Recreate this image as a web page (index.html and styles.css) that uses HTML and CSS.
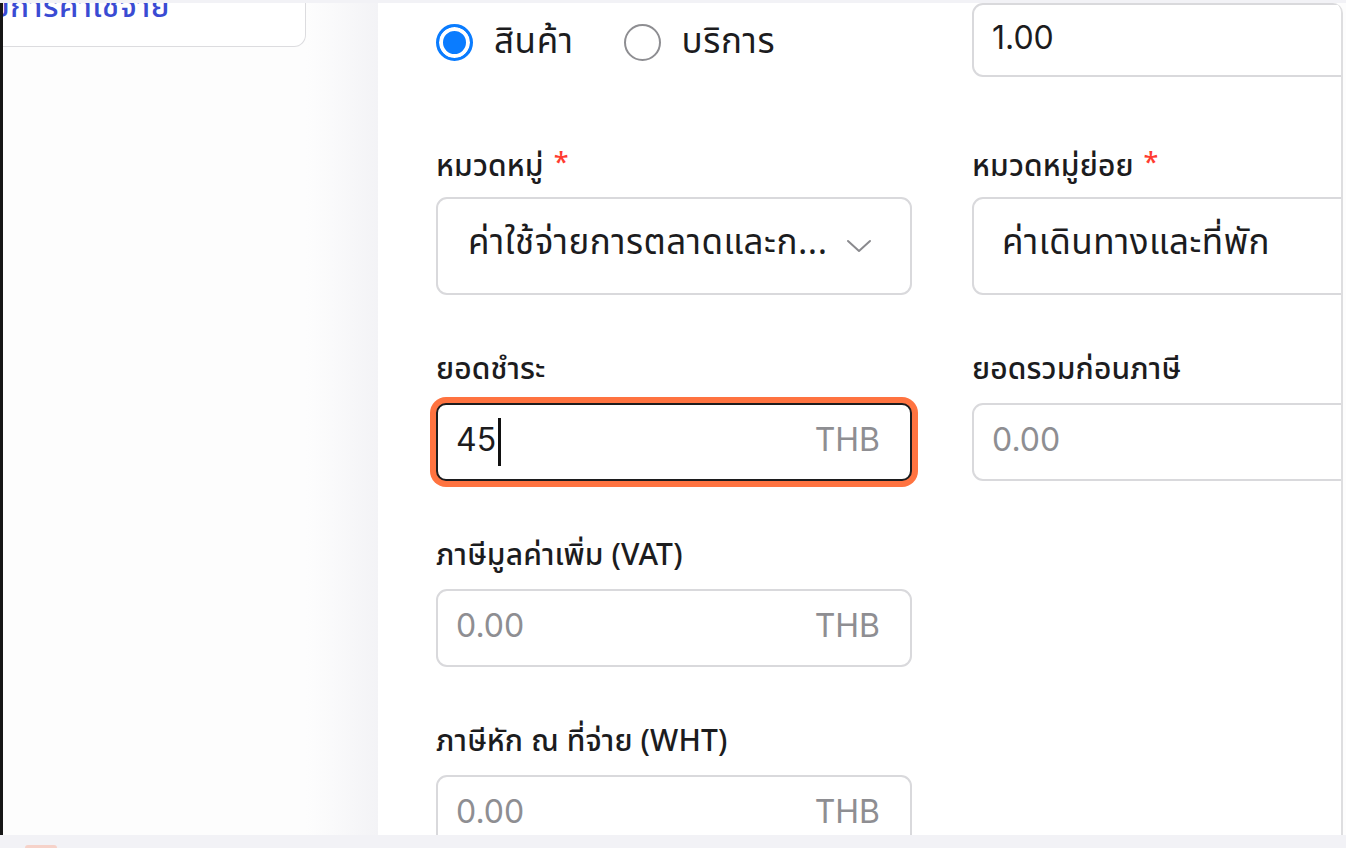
FILE: index.html
```html
<!DOCTYPE html>
<html lang="th">
<head>
<meta charset="utf-8">
<title>รายการค่าใช้จ่าย</title>
<link rel="stylesheet" href="styles.css">
</head>
<body>
<div class="screen">
  <div class="topbar"></div>
  <div class="body">
    <aside class="sidebar">
      <div class="nav-card"><span class="nav-title">รายการค่าใช้จ่าย</span></div>
    </aside>
    <div class="divider"></div>
    <main class="panel">
      <div class="form">
        <div class="row row-first">
          <div class="radio-group">
            <label class="radio"><span class="radio-dot checked"></span><span class="radio-text">สินค้า</span></label>
            <label class="radio"><span class="radio-dot"></span><span class="radio-text">บริการ</span></label>
          </div>
          <div class="field">
            <div class="box box-short"><span class="value">1.00</span></div>
          </div>
        </div>

        <div class="row">
          <div class="field">
            <div class="label">หมวดหมู่ <span class="req">*</span></div>
            <div class="box box-select">
              <span class="select-text">ค่าใช้จ่ายการตลาดและก...</span>
              <svg class="chevron" width="26" height="16" viewBox="0 0 26 16"><path d="M2 3 L13 13 L24 3" fill="none" stroke="#8a8a8e" stroke-width="2" stroke-linecap="round" stroke-linejoin="round"/></svg>
            </div>
          </div>
          <div class="field">
            <div class="label">หมวดหมู่ย่อย <span class="req">*</span></div>
            <div class="box box-select box-sub">
              <span class="select-text">ค่าเดินทางและที่พัก</span>
            </div>
          </div>
        </div>

        <div class="row">
          <div class="field">
            <div class="label">ยอดชำระ</div>
            <div class="box box-focus">
              <span class="value">45</span><span class="caret"></span>
              <span class="unit">THB</span>
            </div>
          </div>
          <div class="field">
            <div class="label">ยอดรวมก่อนภาษี</div>
            <div class="box"><span class="value placeholder">0.00</span></div>
          </div>
        </div>

        <div class="row">
          <div class="field">
            <div class="label">ภาษีมูลค่าเพิ่ม (VAT)</div>
            <div class="box"><span class="value placeholder">0.00</span><span class="unit">THB</span></div>
          </div>
        </div>

        <div class="row">
          <div class="field">
            <div class="label">ภาษีหัก ณ ที่จ่าย (WHT)</div>
            <div class="box"><span class="value placeholder">0.00</span><span class="unit">THB</span></div>
          </div>
        </div>
      </div>
    </main>
  </div>
  <div class="bottombar"><span class="tab-pill"></span></div>
</div>
</body>
</html>
```

FILE: styles.css
```css
* { box-sizing: border-box; }

html, body {
  margin: 0;
  padding: 0;
  width: 1346px;
  height: 848px;
  overflow: hidden;
  background: #f2f2f6;
  font-family: "Noto Sans Thai", "Noto Sans Thai UI", "Inter", "Noto Sans", sans-serif;
  color: #1c1c1e;
}

.screen {
  width: 1346px;
  height: 848px;
  display: flex;
  flex-direction: column;
}

.topbar {
  height: 3px;
  flex: 0 0 3px;
  background: #f2f2f6;
}

.body {
  flex: 1 1 auto;
  display: flex;
  overflow: hidden;
  border-left: 3px solid #161616;
  background: #fdfdfd;
}

.sidebar {
  width: 303px;
  flex: 0 0 303px;
  background: #fdfdfd;
  overflow: hidden;
}

.nav-card {
  margin-top: -40px;
  height: 84px;
  border: 1.5px solid #dcdcdf;
  border-left: none;
  border-radius: 0 0 12px 0;
  background: #fff;
  display: flex;
  align-items: flex-end;
  justify-content: flex-end;
  padding-bottom: 20px;
  padding-right: 135px;
  overflow: hidden;
  white-space: nowrap;
}

.nav-title {
  flex: 0 0 auto;
  font-size: 31px;
  line-height: 36px;
  letter-spacing: 0.6px;
  color: #3a4bd3;
  font-weight: 500;
}

.divider {
  width: 72px;
  flex: 0 0 72px;
  background: linear-gradient(to right, #fdfdfd 0%, #fafafb 35%, #f3f3f6 100%);
}

.panel {
  flex: 1 1 auto;
  background: #ffffff;
  border-right: 2px solid #dedee0;
  border-top-right-radius: 10px;
  overflow: hidden;
  margin-right: 3px;
}

.form {
  padding-left: 58px;
  display: flex;
  flex-direction: column;
}

.row {
  display: grid;
  grid-template-columns: 476px 476px;
  column-gap: 60px;
  margin-top: 58px;
}

.row-first {
  margin-top: 0;
  margin-bottom: 12px;
  align-items: center;
}

.radio-group {
  display: flex;
  align-items: center;
  gap: 50px;
  padding-top: 4px;
}

.radio {
  display: flex;
  align-items: center;
  gap: 21px;
}

.radio-dot {
  width: 37px;
  height: 37px;
  flex: 0 0 37px;
  border-radius: 50%;
  border: 2.5px solid #8e8e92;
  background: #fff;
  display: inline-block;
}

.radio-dot.checked {
  border: 3px solid #0a7cff;
  background: #0a7cff;
  box-shadow: inset 0 0 0 4px #fff;
}

.radio-text {
  font-size: 35px;
  line-height: 44px;
  letter-spacing: 0.6px;
  color: #1c1c1e;
  margin-top: 2px;
}

.field {
  display: flex;
  flex-direction: column;
}

.label {
  font-size: 30px;
  line-height: 34px;
  height: 36px;
  margin-bottom: 14px;
  letter-spacing: 0.15px;
  font-weight: 500;
  color: #1c1c1e;
  white-space: nowrap;
}

.req {
  color: #ff3b30;
  font-size: 27px;
  vertical-align: 4px;
  margin-left: 2px;
}

.box {
  height: 78px;
  border: 2px solid #d9d9dc;
  border-radius: 11px;
  background: #fff;
  display: flex;
  align-items: center;
  padding: 0 30px 4px 18px;
  font-family: "Inter", "Noto Sans Thai", "Noto Sans", sans-serif;
}

.box-short {
  height: 74px;
}

.box-select {
  height: 98px;
  padding: 0 38px 4px 30px;
  justify-content: space-between;
}

.box-sub {
  padding-left: 28px;
}

.box-focus {
  border-color: #1c1c1e;
  box-shadow: 0 0 0 6px #ff7340;
  border-radius: 10px;
}

.value {
  font-size: 32px;
  line-height: 40px;
  color: #1c1c1e;
}

.placeholder {
  color: #8e8e92;
}

.caret {
  display: inline-block;
  width: 2.5px;
  height: 48px;
  background: #111;
  margin-left: 2px;
  margin-top: 4px;
}

.unit {
  margin-left: auto;
  font-size: 32px;
  line-height: 40px;
  color: #8e8e92;
}

.select-text {
  font-family: "Noto Sans Thai", "Noto Sans Thai UI", "Inter", sans-serif;
  font-size: 35px;
  line-height: 44px;
  letter-spacing: 0.5px;
  color: #1c1c1e;
  white-space: nowrap;
}

.chevron {
  flex: 0 0 auto;
  margin-top: 4px;
}

.bottombar {
  height: 13px;
  flex: 0 0 13px;
  background: #f2f2f6;
  position: relative;
}

.tab-pill {
  position: absolute;
  left: 25px;
  top: 10px;
  width: 32px;
  height: 8px;
  border-radius: 3px;
  background: #f6d2c9;
}
```
